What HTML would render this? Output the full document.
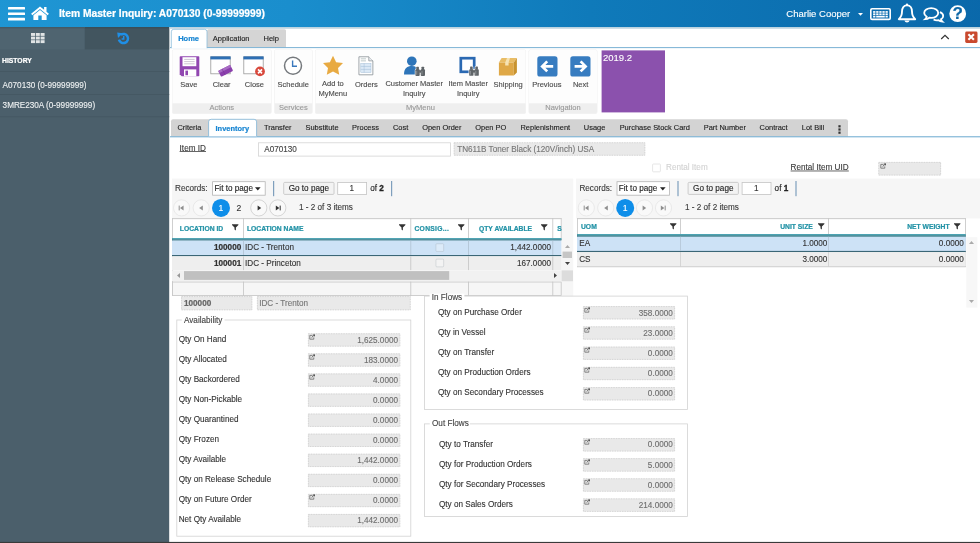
<!DOCTYPE html>
<html lang="en">
<head>
<meta charset="utf-8">
<title>Item Master Inquiry: A070130 (0-99999999)</title>
<style>
html,body{margin:0;padding:0;}
body{width:980px;height:543px;overflow:hidden;position:relative;background:#fff;font-family:"Liberation Sans",Arial,sans-serif;}
#app{position:absolute;left:0;top:0;width:980px;height:543px;overflow:hidden;}
#layer{position:absolute;left:0;top:0;width:980px;height:543px;will-change:transform;}
#app span,#app svg{position:absolute;}
#bg{left:0;top:0;overflow:visible;}
.t{white-space:nowrap;display:block;-webkit-text-stroke:0.12px;}
.b{font-weight:bold;-webkit-text-stroke:0.22px;}
.t b{font-weight:bold;-webkit-text-stroke:0.3px;}
.i{overflow:visible;}
</style>
</head>
<body>
<div id="app">
<div id="layer">
<svg id="bg" width="980" height="543" viewBox="0 0 980 543"><defs><linearGradient id="hg" x1="0" y1="0" x2="1" y2="0"><stop offset="0" stop-color="#1f96d4"/><stop offset="0.3" stop-color="#1a8ecd"/><stop offset="0.6" stop-color="#0f7aba"/><stop offset="1" stop-color="#0a68aa"/></linearGradient></defs>
<rect x="-8.00" y="-8.00" width="996.00" height="35.20" fill="url(#hg)" />
<rect x="8.00" y="6.90" width="17.00" height="2.70" fill="#fff" rx="0.5" />
<rect x="8.00" y="12.40" width="17.00" height="2.70" fill="#fff" rx="0.5" />
<rect x="8.00" y="17.70" width="17.00" height="2.70" fill="#fff" rx="0.5" />
<circle cx="957.7" cy="13.7" r="8.4" fill="#fff"/>
<rect x="-8.00" y="27.20" width="177.20" height="523.80" fill="#4b5f6b" />
<rect x="-8.00" y="27.00" width="92.80" height="22.40" fill="#4f6470" />
<rect x="84.80" y="27.00" width="84.40" height="22.40" fill="#42555f" />
<rect x="-8.00" y="27.20" width="177.20" height="1.10" fill="rgba(30,50,62,0.25)" />
<rect x="-8.00" y="71.20" width="177.20" height="0.80" fill="#445762" />
<rect x="-8.00" y="94.00" width="177.20" height="0.80" fill="#445762" />
<rect x="-8.00" y="116.40" width="177.20" height="0.80" fill="#445762" />
<rect x="169.20" y="27.20" width="818.80" height="1.50" fill="#b9d0dc" />
<path d="M207.00 47.20 V30.70 Q207.00 29.20 208.50 29.20 H284.50 Q286.00 29.20 286.00 30.70 V47.20" fill="#d5d5d5"/>
<rect x="170.00" y="47.20" width="818.00" height="0.90" fill="#6aa9cf" />
<path d="M171.30 48.20 V31.80 Q171.30 29.30 173.80 29.30 H204.50 Q207.00 29.30 207.00 31.80 V48.20" fill="#fff" stroke="#8dbcda" stroke-width="0.8"/>
<rect x="965.20" y="31.60" width="12.30" height="11.40" fill="#c9492e" rx="1.4" />
<rect x="172.00" y="49.40" width="99.60" height="64.50" fill="#ededed" rx="1.8" />
<rect x="172.40" y="49.80" width="98.80" height="63.70" fill="#fdfdfd" rx="1.5" />
<path d="M172.4 103.2 H271.2 V112 Q271.2 113.5 269.7 113.5 H173.9 Q172.4 113.5 172.4 112 Z" fill="#efefef"/>
<rect x="274.20" y="49.40" width="38.40" height="64.50" fill="#ededed" rx="1.8" />
<rect x="274.60" y="49.80" width="37.60" height="63.70" fill="#fdfdfd" rx="1.5" />
<path d="M274.6 103.2 H312.2 V112 Q312.2 113.5 310.7 113.5 H276.1 Q274.6 113.5 274.6 112 Z" fill="#efefef"/>
<rect x="315.00" y="49.40" width="211.00" height="64.50" fill="#ededed" rx="1.8" />
<rect x="315.40" y="49.80" width="210.20" height="63.70" fill="#fdfdfd" rx="1.5" />
<path d="M315.4 103.2 H525.6 V112 Q525.6 113.5 524.1 113.5 H316.9 Q315.4 113.5 315.4 112 Z" fill="#efefef"/>
<rect x="528.60" y="49.40" width="68.80" height="64.50" fill="#ededed" rx="1.8" />
<rect x="529.00" y="49.80" width="68.00" height="63.70" fill="#fdfdfd" rx="1.5" />
<path d="M529 103.2 H597 V112 Q597 113.5 595.5 113.5 H530.5 Q529 113.5 529 112 Z" fill="#efefef"/>
<rect x="601.60" y="50.40" width="63.40" height="62.00" fill="#8b51ad" />
<path d="M171.00 136.60 V121.30 Q171.00 119.30 173.00 119.30 H846.00 Q848.00 119.30 848.00 121.30 V136.60" fill="#d3d3d3"/>
<rect x="170.00" y="136.30" width="818.00" height="1.00" fill="#6aa9cf" />
<path d="M208.60 136.40 V121.80 Q208.60 119.30 211.10 119.30 H254.10 Q256.60 119.30 256.60 121.80 V136.40" fill="#fff" stroke="#7fb4d6" stroke-width="0.8"/>
<rect x="209.00" y="136.30" width="47.20" height="1.00" fill="#a9cde6" />
<rect x="838.40" y="125.20" width="2.20" height="2.20" fill="#333" />
<rect x="838.40" y="128.40" width="2.20" height="2.20" fill="#333" />
<rect x="838.40" y="131.60" width="2.20" height="2.20" fill="#333" />
<rect x="179.60" y="151.10" width="26.40" height="0.75" fill="#333" />
<rect x="258.40" y="142.80" width="192.00" height="13.30" fill="#fff" stroke="#d4d4d4" stroke-width="0.8" />
<rect x="453.80" y="142.40" width="191.40" height="13.20" fill="#e9e9e9"/>
<rect x="454.15" y="142.75" width="190.70" height="12.50" fill="none" stroke="#cbcbcb" stroke-width="0.7" stroke-dasharray="1.4 1.1" />
<rect x="652.60" y="164.00" width="7.80" height="7.80" fill="#fff" stroke="#e0e0e0" stroke-width="0.8" rx="0.8" />
<rect x="790.60" y="170.60" width="58.20" height="0.75" fill="#333" />
<rect x="878.40" y="162.00" width="62.60" height="13.40" fill="#e9e9e9"/>
<rect x="878.75" y="162.35" width="61.90" height="12.70" fill="none" stroke="#cbcbcb" stroke-width="0.7" stroke-dasharray="1.4 1.1" />
<rect x="172.00" y="178.60" width="401.20" height="39.80" fill="#f6f6f6" />
<rect x="212.60" y="181.70" width="52.60" height="13.50" fill="#fff" stroke="#b4b4b4" stroke-width="0.8" />
<rect x="273.00" y="181.00" width="1.20" height="15.20" fill="#7f9fbd" />
<rect x="283.70" y="182.40" width="50.30" height="12.00" fill="#f3f3f3" stroke="#c2c2c2" stroke-width="0.8" rx="1" />
<rect x="337.70" y="182.40" width="28.90" height="12.00" fill="#fff" stroke="#c4c4c4" stroke-width="0.8" />
<rect x="391.00" y="181.00" width="1.20" height="15.20" fill="#7f9fbd" />
<circle cx="181.6" cy="207.9" r="8.1" fill="#f9f9f9" stroke="#e2e2e2" stroke-width="0.7"/>
<circle cx="201.2" cy="207.9" r="8.1" fill="#f9f9f9" stroke="#e2e2e2" stroke-width="0.7"/>
<circle cx="221" cy="207.9" r="9" fill="#0e8ee9"/>
<circle cx="258.8" cy="207.9" r="8.1" fill="#f9f9f9" stroke="#c6c6c6" stroke-width="0.7"/>
<circle cx="277.8" cy="207.9" r="8.1" fill="#f9f9f9" stroke="#c6c6c6" stroke-width="0.7"/>
<rect x="576.00" y="178.60" width="412.00" height="39.80" fill="#f6f6f6" />
<rect x="617.00" y="181.70" width="52.60" height="13.50" fill="#fff" stroke="#b4b4b4" stroke-width="0.8" />
<rect x="677.40" y="181.00" width="1.20" height="15.20" fill="#7f9fbd" />
<rect x="688.10" y="182.40" width="50.30" height="12.00" fill="#f3f3f3" stroke="#c2c2c2" stroke-width="0.8" rx="1" />
<rect x="742.10" y="182.40" width="28.90" height="12.00" fill="#fff" stroke="#c4c4c4" stroke-width="0.8" />
<rect x="795.40" y="181.00" width="1.20" height="15.20" fill="#7f9fbd" />
<circle cx="586.3" cy="207.9" r="8.1" fill="#f9f9f9" stroke="#e2e2e2" stroke-width="0.7"/>
<circle cx="605.7" cy="207.9" r="8.1" fill="#f9f9f9" stroke="#e2e2e2" stroke-width="0.7"/>
<circle cx="625.2" cy="207.9" r="9" fill="#0e8ee9"/>
<circle cx="644.5" cy="207.9" r="8.1" fill="#f9f9f9" stroke="#e2e2e2" stroke-width="0.7"/>
<circle cx="663.5" cy="207.9" r="8.1" fill="#f9f9f9" stroke="#e2e2e2" stroke-width="0.7"/>
<rect x="561.60" y="218.00" width="11.60" height="78.20" fill="#f6f6f6" />
<rect x="172.00" y="218.30" width="389.60" height="19.90" fill="#fff" />
<rect x="172.00" y="218.30" width="389.60" height="0.80" fill="#bdbdbd" />
<rect x="172.00" y="218.30" width="0.80" height="77.50" fill="#c4c4c4" />
<rect x="560.80" y="218.30" width="0.80" height="19.90" fill="#c4c4c4" />
<rect x="243.10" y="218.30" width="0.80" height="19.90" fill="#c4c4c4" />
<rect x="410.40" y="218.30" width="0.80" height="19.90" fill="#c4c4c4" />
<rect x="468.20" y="218.30" width="0.80" height="19.90" fill="#c4c4c4" />
<rect x="552.40" y="218.30" width="0.80" height="19.90" fill="#c4c4c4" />
<rect x="172.00" y="238.10" width="389.60" height="1.50" fill="#3f9cac" />
<rect x="172.00" y="239.40" width="389.60" height="1.30" fill="#2c7080" />
<rect x="172.00" y="240.60" width="389.60" height="14.60" fill="#cde2f6" />
<rect x="172.00" y="255.00" width="389.60" height="1.30" fill="#3a6676" />
<rect x="172.00" y="256.30" width="389.60" height="13.90" fill="#eeeeee" />
<rect x="243.10" y="240.60" width="0.80" height="14.40" fill="#b0c2d2" />
<rect x="243.10" y="256.30" width="0.80" height="13.90" fill="#c4c4c4" />
<rect x="410.40" y="240.60" width="0.80" height="14.40" fill="#b0c2d2" />
<rect x="410.40" y="256.30" width="0.80" height="13.90" fill="#c4c4c4" />
<rect x="468.20" y="240.60" width="0.80" height="14.40" fill="#b0c2d2" />
<rect x="468.20" y="256.30" width="0.80" height="13.90" fill="#c4c4c4" />
<rect x="552.40" y="240.60" width="0.80" height="14.40" fill="#b0c2d2" />
<rect x="552.40" y="256.30" width="0.80" height="13.90" fill="#c4c4c4" />
<rect x="435.95" y="243.75" width="7.70" height="7.70" fill="rgba(255,255,255,0.3)" stroke="rgba(150,160,170,0.4)" stroke-width="0.7" rx="0.8" />
<rect x="435.95" y="259.15" width="7.70" height="7.70" fill="rgba(255,255,255,0.3)" stroke="rgba(150,160,170,0.4)" stroke-width="0.7" rx="0.8" />
<rect x="561.60" y="240.00" width="11.40" height="30.40" fill="#f6f6f6" />
<rect x="562.60" y="251.60" width="9.40" height="6.40" fill="#c6c6c6" />
<rect x="172.00" y="270.40" width="389.60" height="10.80" fill="#f1f1f1" />
<rect x="184.00" y="271.10" width="265.20" height="8.80" fill="#c0c0c0" />
<rect x="561.60" y="270.40" width="11.40" height="10.80" fill="#dcdcdc" />
<rect x="172.40" y="282.00" width="388.80" height="13.40" fill="#f6f6f6" stroke="#c4c4c4" stroke-width="0.8" />
<rect x="243.10" y="281.60" width="0.80" height="14.20" fill="#c4c4c4" />
<rect x="410.40" y="281.60" width="0.80" height="14.20" fill="#c4c4c4" />
<rect x="468.20" y="281.60" width="0.80" height="14.20" fill="#c4c4c4" />
<rect x="552.40" y="281.60" width="0.80" height="14.20" fill="#c4c4c4" />
<rect x="577.00" y="218.30" width="388.80" height="15.90" fill="#fff" />
<rect x="577.00" y="218.30" width="388.80" height="0.80" fill="#bdbdbd" />
<rect x="577.00" y="218.30" width="0.80" height="48.70" fill="#c4c4c4" />
<rect x="965.00" y="218.30" width="0.80" height="48.70" fill="#c4c4c4" />
<rect x="680.20" y="218.30" width="0.80" height="15.90" fill="#c4c4c4" />
<rect x="828.20" y="218.30" width="0.80" height="15.90" fill="#c4c4c4" />
<rect x="577.00" y="234.10" width="388.80" height="1.50" fill="#3a9aaa" />
<rect x="577.00" y="235.40" width="388.80" height="1.40" fill="#2c7484" />
<rect x="577.00" y="236.80" width="388.80" height="14.20" fill="#cde2f6" />
<rect x="577.00" y="250.90" width="388.80" height="1.30" fill="#3a6676" />
<rect x="577.00" y="252.10" width="388.80" height="14.70" fill="#eeeeee" />
<rect x="577.00" y="266.40" width="388.80" height="0.80" fill="#c4c4c4" />
<rect x="680.20" y="236.80" width="0.80" height="14.00" fill="#b4c6d6" />
<rect x="680.20" y="252.10" width="0.80" height="14.70" fill="#cfcfcf" />
<rect x="828.20" y="236.80" width="0.80" height="14.00" fill="#b4c6d6" />
<rect x="828.20" y="252.10" width="0.80" height="14.70" fill="#cfcfcf" />
<rect x="966.30" y="237.20" width="11.10" height="70.40" fill="#f7f7f7" />
<rect x="181.20" y="296.20" width="71.00" height="14.00" fill="#e9e9e9"/>
<rect x="181.55" y="296.55" width="70.30" height="13.30" fill="none" stroke="#cbcbcb" stroke-width="0.7" stroke-dasharray="1.4 1.1" />
<rect x="257.00" y="296.20" width="153.60" height="14.00" fill="#e9e9e9"/>
<rect x="257.35" y="296.55" width="152.90" height="13.30" fill="none" stroke="#cbcbcb" stroke-width="0.7" stroke-dasharray="1.4 1.1" />
<rect x="176.80" y="320.00" width="234.00" height="216.20" fill="none" stroke="#d2d2d2" stroke-width="0.8" />
<rect x="181.80" y="317.60" width="42.80" height="4.00" fill="#fff" />
<rect x="308.00" y="333.40" width="92.20" height="13.10" fill="#e9e9e9"/>
<rect x="308.35" y="333.75" width="91.50" height="12.40" fill="none" stroke="#cbcbcb" stroke-width="0.7" stroke-dasharray="1.4 1.1" />
<rect x="308.00" y="353.47" width="92.20" height="13.10" fill="#e9e9e9"/>
<rect x="308.35" y="353.82" width="91.50" height="12.40" fill="none" stroke="#cbcbcb" stroke-width="0.7" stroke-dasharray="1.4 1.1" />
<rect x="308.00" y="373.54" width="92.20" height="13.10" fill="#e9e9e9"/>
<rect x="308.35" y="373.89" width="91.50" height="12.40" fill="none" stroke="#cbcbcb" stroke-width="0.7" stroke-dasharray="1.4 1.1" />
<rect x="308.00" y="393.61" width="92.20" height="13.10" fill="#e9e9e9"/>
<rect x="308.35" y="393.96" width="91.50" height="12.40" fill="none" stroke="#cbcbcb" stroke-width="0.7" stroke-dasharray="1.4 1.1" />
<rect x="308.00" y="413.68" width="92.20" height="13.10" fill="#e9e9e9"/>
<rect x="308.35" y="414.03" width="91.50" height="12.40" fill="none" stroke="#cbcbcb" stroke-width="0.7" stroke-dasharray="1.4 1.1" />
<rect x="308.00" y="433.75" width="92.20" height="13.10" fill="#e9e9e9"/>
<rect x="308.35" y="434.10" width="91.50" height="12.40" fill="none" stroke="#cbcbcb" stroke-width="0.7" stroke-dasharray="1.4 1.1" />
<rect x="308.00" y="453.82" width="92.20" height="13.10" fill="#e9e9e9"/>
<rect x="308.35" y="454.17" width="91.50" height="12.40" fill="none" stroke="#cbcbcb" stroke-width="0.7" stroke-dasharray="1.4 1.1" />
<rect x="308.00" y="473.89" width="92.20" height="13.10" fill="#e9e9e9"/>
<rect x="308.35" y="474.24" width="91.50" height="12.40" fill="none" stroke="#cbcbcb" stroke-width="0.7" stroke-dasharray="1.4 1.1" />
<rect x="308.00" y="493.96" width="92.20" height="13.10" fill="#e9e9e9"/>
<rect x="308.35" y="494.31" width="91.50" height="12.40" fill="none" stroke="#cbcbcb" stroke-width="0.7" stroke-dasharray="1.4 1.1" />
<rect x="308.00" y="514.03" width="92.20" height="13.10" fill="#e9e9e9"/>
<rect x="308.35" y="514.38" width="91.50" height="12.40" fill="none" stroke="#cbcbcb" stroke-width="0.7" stroke-dasharray="1.4 1.1" />
<rect x="424.50" y="296.10" width="262.90" height="113.30" fill="none" stroke="#d2d2d2" stroke-width="0.8" />
<rect x="429.60" y="293.70" width="34.80" height="4.00" fill="#fff" />
<rect x="583.00" y="306.20" width="92.00" height="13.10" fill="#e9e9e9"/>
<rect x="583.35" y="306.55" width="91.30" height="12.40" fill="none" stroke="#cbcbcb" stroke-width="0.7" stroke-dasharray="1.4 1.1" />
<rect x="583.00" y="326.45" width="92.00" height="13.10" fill="#e9e9e9"/>
<rect x="583.35" y="326.80" width="91.30" height="12.40" fill="none" stroke="#cbcbcb" stroke-width="0.7" stroke-dasharray="1.4 1.1" />
<rect x="583.00" y="346.70" width="92.00" height="13.10" fill="#e9e9e9"/>
<rect x="583.35" y="347.05" width="91.30" height="12.40" fill="none" stroke="#cbcbcb" stroke-width="0.7" stroke-dasharray="1.4 1.1" />
<rect x="583.00" y="366.95" width="92.00" height="13.10" fill="#e9e9e9"/>
<rect x="583.35" y="367.30" width="91.30" height="12.40" fill="none" stroke="#cbcbcb" stroke-width="0.7" stroke-dasharray="1.4 1.1" />
<rect x="583.00" y="387.20" width="92.00" height="13.10" fill="#e9e9e9"/>
<rect x="583.35" y="387.55" width="91.30" height="12.40" fill="none" stroke="#cbcbcb" stroke-width="0.7" stroke-dasharray="1.4 1.1" />
<rect x="424.50" y="423.90" width="262.90" height="92.60" fill="none" stroke="#d2d2d2" stroke-width="0.8" />
<rect x="429.80" y="421.50" width="40.20" height="4.00" fill="#fff" />
<rect x="583.00" y="438.20" width="92.00" height="13.20" fill="#e9e9e9"/>
<rect x="583.35" y="438.55" width="91.30" height="12.50" fill="none" stroke="#cbcbcb" stroke-width="0.7" stroke-dasharray="1.4 1.1" />
<rect x="583.00" y="458.30" width="92.00" height="13.20" fill="#e9e9e9"/>
<rect x="583.35" y="458.65" width="91.30" height="12.50" fill="none" stroke="#cbcbcb" stroke-width="0.7" stroke-dasharray="1.4 1.1" />
<rect x="583.00" y="478.40" width="92.00" height="13.20" fill="#e9e9e9"/>
<rect x="583.35" y="478.75" width="91.30" height="12.50" fill="none" stroke="#cbcbcb" stroke-width="0.7" stroke-dasharray="1.4 1.1" />
<rect x="583.00" y="498.50" width="92.00" height="13.20" fill="#e9e9e9"/>
<rect x="583.35" y="498.85" width="91.30" height="12.50" fill="none" stroke="#cbcbcb" stroke-width="0.7" stroke-dasharray="1.4 1.1" />
<rect x="-8.00" y="541.90" width="996.00" height="9.10" fill="#3a3a3a" />
</svg>
<header id="topbar">
<svg class="i" style="left:31.40px;top:6.40px;" width="18" height="14" viewBox="0 0 18 14"><path d="M9 0.5 L0.1 7.7 L1.3 9.2 L9 3 L16.7 9.2 L17.9 7.7 L15.5 5.7 V1 H13.1 V3.8 Z" fill="#fff"/><path d="M2.4 9.3 L9 3.9 L15.6 9.3 V13.9 H10.7 V9.6 H7.3 V13.9 H2.4 Z" fill="#fff"/></svg>
<svg class="i" style="left:858.00px;top:12.60px;" width="5" height="3" viewBox="0 0 5 3"><path d="M0 0 H5 L2.5 2.8 Z" fill="#fff"/></svg>
<svg class="i" style="left:870.40px;top:8.20px;" width="21" height="12.2" viewBox="0 0 21 12.2"><rect x="0.8" y="0.8" width="19.4" height="10.6" rx="1.2" fill="none" stroke="#fff" stroke-width="1.6"/><g fill="#fff"><rect x="3.1" y="3.1" width="2.3" height="1.7"/><rect x="6.2" y="3.1" width="2.3" height="1.7"/><rect x="9.3" y="3.1" width="2.3" height="1.7"/><rect x="12.4" y="3.1" width="2.3" height="1.7"/><rect x="15.5" y="3.1" width="2.3" height="1.7"/><rect x="3.1" y="5.4" width="2.3" height="1.7"/><rect x="6.2" y="5.4" width="2.3" height="1.7"/><rect x="9.3" y="5.4" width="2.3" height="1.7"/><rect x="12.4" y="5.4" width="2.3" height="1.7"/><rect x="15.5" y="5.4" width="2.3" height="1.7"/><rect x="3.1" y="7.8" width="2.3" height="1.7"/><rect x="6.2" y="7.8" width="8.6" height="1.7"/><rect x="15.5" y="7.8" width="2.3" height="1.7"/></g></svg>
<svg class="i" style="left:897.00px;top:3.00px;" width="20" height="21" viewBox="0 0 20 21"><path d="M10 2.4 C6.4 2.4 5 5.2 5 8.6 C5 12.6 3.6 14.6 1.8 16.2 H18.2 C16.4 14.6 15 12.6 15 8.6 C15 5.2 13.6 2.4 10 2.4 Z" fill="none" stroke="#fff" stroke-width="1.9" stroke-linejoin="round"/><path d="M7.4 17.6 A2.7 2.7 0 0 0 12.6 17.6 Z" fill="#fff"/><circle cx="10" cy="1.7" r="1.2" fill="#fff"/></svg>
<svg class="i" style="left:922.60px;top:6.60px;" width="22" height="16" viewBox="0 0 22 16"><path d="M8.2 1.2 C4.2 1.2 1.2 3.3 1.2 6 C1.2 7.5 2.2 8.8 3.7 9.7 C3.5 10.7 3 11.5 2.2 12.2 C3.9 12.1 5.3 11.5 6.3 10.7 C6.9 10.8 7.5 10.85 8.2 10.85 C12.2 10.85 15.2 8.7 15.2 6 C15.2 3.3 12.2 1.2 8.2 1.2 Z" fill="none" stroke="#fff" stroke-width="1.8"/><path d="M16.9 5.2 C18.9 6 20.2 7.4 20.2 9 C20.2 10.3 19.4 11.5 18 12.3 C18.2 13.2 18.7 14 19.4 14.6 C17.8 14.5 16.5 14 15.5 13.2 C14.2 13.4 12 13.3 10.6 12.5" fill="none" stroke="#fff" stroke-width="1.8"/></svg>
<span class="t b" style="left:59.00px;top:7px;height:14px;line-height:14px;color:#fff;font-size:10.25px;">Item Master Inquiry: A070130 (0-99999999)</span>
<span class="t " style="left:786.30px;top:7px;height:14px;line-height:14px;color:#fff;font-size:9.5px;">Charlie Cooper</span>
<span class="t b" style="left:807.80px;width:300px;text-align:center;top:5px;height:18px;line-height:18px;color:#0b66a6;font-size:17px;">?</span>
</header>
<aside id="sidebar">
<svg class="i" style="left:31.30px;top:32.80px;" width="14" height="11" viewBox="0 0 14 11"><rect x="0.0" y="0.0" width="4.0" height="2.9" fill="#e0e4e5"/><rect x="4.8" y="0.0" width="4.0" height="2.9" fill="#e0e4e5"/><rect x="9.6" y="0.0" width="4.0" height="2.9" fill="#e0e4e5"/><rect x="0.0" y="3.6" width="4.0" height="2.9" fill="#e0e4e5"/><rect x="4.8" y="3.6" width="4.0" height="2.9" fill="#e0e4e5"/><rect x="9.6" y="3.6" width="4.0" height="2.9" fill="#e0e4e5"/><rect x="0.0" y="7.2" width="4.0" height="2.9" fill="#e0e4e5"/><rect x="4.8" y="7.2" width="4.0" height="2.9" fill="#e0e4e5"/><rect x="9.6" y="7.2" width="4.0" height="2.9" fill="#e0e4e5"/></svg>
<svg class="i" style="left:116.60px;top:32.00px;" width="13" height="13" viewBox="0 0 13 13"><path d="M3.76 2.73 A4.6 4.6 0 1 1 1.96 7.69" fill="none" stroke="#1f8fe6" stroke-width="2.5"/><path d="M0.2 0.5 L5.8 1.2 L1 5.9 Z" fill="#1f8fe6"/><path d="M6.7 4 V6.9 H4.6" fill="none" stroke="#1f8fe6" stroke-width="1.5"/></svg>
<span class="t b" style="left:2.00px;top:56px;height:10px;line-height:10px;color:#fff;font-size:6.8px;">HISTORY</span>
<span class="t " style="left:2.60px;top:80px;height:12px;line-height:12px;color:#eef1f2;font-size:8.17px;">A070130 (0-99999999)</span>
<span class="t " style="left:2.60px;top:100px;height:12px;line-height:12px;color:#eef1f2;font-size:8.17px;">3MRE230A (0-99999999)</span>
</aside>
<nav id="ribbon">
<svg class="i" style="left:939.60px;top:33.90px;" width="10" height="6" viewBox="0 0 10 6"><path d="M1.2 5 L5 1.4 L8.8 5" fill="none" stroke="#333" stroke-width="1.2"/></svg>
<svg class="i" style="left:965.20px;top:31.20px;" width="12.3" height="12" viewBox="0 0 12.3 12"><path d="M3.4 3.2 L8.9 8.7 M8.9 3.2 L3.4 8.7" stroke="#fff" stroke-width="2.1"/></svg>
<svg class="i" style="left:178.60px;top:55.60px;" width="21" height="21" viewBox="0 0 21 21"><path d="M0.7 1.1 Q0.7 0.3 1.5 0.3 H19.5 Q20.3 0.3 20.3 1.1 V19.5 Q20.3 20.3 19.5 20.3 H2.7 L0.7 18.3 Z" fill="#9147b1"/><rect x="3.5" y="1.2" width="13.8" height="9" fill="#fff"/><g stroke="#c2b8c8" stroke-width="0.8"><path d="M5.2 3.4 H15.6 M5.2 5.6 H15.6 M5.2 7.8 H15.6"/></g><rect x="5" y="13.4" width="12.3" height="6.9" fill="#fff"/><rect x="6.4" y="14.6" width="2.6" height="4.6" fill="#9147b1"/></svg>
<svg class="i" style="left:210.10px;top:56.40px;" width="23" height="21" viewBox="0 0 23 21"><rect x="0.8" y="0.8" width="19.4" height="17" fill="#fff" stroke="#9a9a9a" stroke-width="0.8"/><rect x="0.4" y="0.4" width="20.2" height="3" fill="#2e6fb4"/><g transform="rotate(-27 15.6 15)"><rect x="9" y="11.6" width="13.4" height="6.6" rx="0.8" fill="#8a3fac"/><rect x="9" y="11.6" width="13.4" height="2.4" rx="0.8" fill="#a86cc4"/><path d="M13.4 11.6 V18.2" stroke="#7a339b" stroke-width="0.6"/></g></svg>
<svg class="i" style="left:243.10px;top:56.40px;" width="23" height="21" viewBox="0 0 23 21"><rect x="0.8" y="0.8" width="19.4" height="17" fill="#fff" stroke="#9a9a9a" stroke-width="0.8"/><rect x="0.4" y="0.4" width="20.2" height="3" fill="#2e6fb4"/><circle cx="17" cy="15.4" r="4.9" fill="#d8483c"/><path d="M15 13.4 L19 17.4 M19 13.4 L15 17.4" stroke="#fff" stroke-width="1.6"/></svg>
<svg class="i" style="left:283.00px;top:56.00px;" width="20" height="20" viewBox="0 0 20 20"><circle cx="10" cy="9.8" r="8.5" fill="#fff" stroke="#75797d" stroke-width="1.5"/><path d="M9.6 4.6 V10.2 H14" fill="none" stroke="#3a78bd" stroke-width="1.4"/></svg>
<svg class="i" style="left:321.80px;top:55.40px;" width="22" height="20" viewBox="0 0 22 20"><path d="M11 0.8 L14.1 7.2 L21 8.1 L16 13 L17.2 19.8 L11 16.6 L4.8 19.8 L6 13 L1 8.1 L7.9 7.2 Z" fill="#e8aa42"/></svg>
<svg class="i" style="left:358.30px;top:56.00px;" width="15.8" height="19.6" viewBox="0 0 17 21"><path d="M1 0.8 H11.6 L16 5.2 V20.2 H1 Z" fill="#fff" stroke="#8d9499" stroke-width="0.9"/><path d="M11.6 0.8 V5.2 H16" fill="#e8ecef" stroke="#8d9499" stroke-width="0.8"/><rect x="3" y="8" width="11" height="9.6" fill="#dbe9f6" stroke="#9db9d4" stroke-width="0.5"/><path d="M3 11.2 H14 M3 14.4 H14 M6.6 8 V17.6" stroke="#9db9d4" stroke-width="0.5"/><path d="M3 3 H8.6 M3 5.2 H8.6" stroke="#9aa" stroke-width="0.7"/></svg>
<svg class="i" style="left:403.50px;top:56.00px;" width="22" height="21" viewBox="0 0 22 21"><circle cx="7.8" cy="5.2" r="4.8" fill="#2e75b9"/><path d="M0 18.4 C0 12.4 3.2 10 7.8 10 C11.6 10 13.8 11.6 14.6 14.4 V18.4 Z" fill="#2e75b9"/><g transform="translate(11.2 10.7)"><g fill="#fff" stroke="#fff" stroke-width="1.2"><rect x="1.1" y="0" width="2.6" height="3.2" rx="0.5"/><rect x="6.3" y="0" width="2.6" height="3.2" rx="0.5"/><rect x="0.2" y="2.6" width="4.3" height="6.6" rx="0.9"/><rect x="5.5" y="2.6" width="4.3" height="6.6" rx="0.9"/><rect x="4" y="3.6" width="2" height="2.4"/></g><g fill="#5f6468"><rect x="1.1" y="0" width="2.6" height="3.2" rx="0.5"/><rect x="6.3" y="0" width="2.6" height="3.2" rx="0.5"/><rect x="0.2" y="2.6" width="4.3" height="6.6" rx="0.9"/><rect x="5.5" y="2.6" width="4.3" height="6.6" rx="0.9"/><rect x="4" y="3.6" width="2" height="2.4"/></g><path d="M1.5 4.2 V8 M6.8 4.2 V8" stroke="#9a9ea2" stroke-width="0.7"/></g></svg>
<svg class="i" style="left:458.50px;top:56.00px;" width="22" height="21" viewBox="0 0 22 21"><rect x="1.8" y="2.2" width="13.4" height="13.6" fill="#fff" stroke="#2b69b2" stroke-width="2.7"/><g transform="translate(10 10.6)"><g fill="#fff" stroke="#fff" stroke-width="1.2"><rect x="1.1" y="0" width="2.6" height="3.2" rx="0.5"/><rect x="6.3" y="0" width="2.6" height="3.2" rx="0.5"/><rect x="0.2" y="2.6" width="4.3" height="6.6" rx="0.9"/><rect x="5.5" y="2.6" width="4.3" height="6.6" rx="0.9"/><rect x="4" y="3.6" width="2" height="2.4"/></g><g fill="#5f6468"><rect x="1.1" y="0" width="2.6" height="3.2" rx="0.5"/><rect x="6.3" y="0" width="2.6" height="3.2" rx="0.5"/><rect x="0.2" y="2.6" width="4.3" height="6.6" rx="0.9"/><rect x="5.5" y="2.6" width="4.3" height="6.6" rx="0.9"/><rect x="4" y="3.6" width="2" height="2.4"/></g><path d="M1.5 4.2 V8 M6.8 4.2 V8" stroke="#9a9ea2" stroke-width="0.7"/></g></svg>
<svg class="i" style="left:498.00px;top:57.00px;" width="20" height="19" viewBox="0 0 20 19"><path d="M0.9 5.4 H15.8 V18.5 H0.9 Z" fill="#dfa847"/><path d="M0.9 5.4 L3.6 1.1 H18.9 L15.8 5.4 Z" fill="#e9bd66"/><path d="M15.8 5.4 L18.9 1.1 V15.6 L15.8 18.5 Z" fill="#c8932f"/><path d="M7.2 5.4 L9 1.1 H12 L10.6 5.4 V8.6 H7.2 Z" fill="#f6e3b4"/></svg>
<svg class="i" style="left:536.80px;top:55.60px;" width="21" height="21" viewBox="0 0 21 21"><rect x="0.3" y="0.3" width="20.2" height="20.2" rx="2.6" fill="#377cc0"/><path d="M16.2 10.4 H5.8 M10.2 5.4 L5.2 10.4 L10.2 15.4" fill="none" stroke="#fff" stroke-width="2.7"/></svg>
<svg class="i" style="left:570.20px;top:55.60px;" width="21" height="21" viewBox="0 0 21 21"><rect x="0.3" y="0.3" width="20.2" height="20.2" rx="2.6" fill="#377cc0"/><path d="M4.6 10.4 H15 M10.6 5.4 L15.6 10.4 L10.6 15.4" fill="none" stroke="#fff" stroke-width="2.7"/></svg>
<span class="t b" style="left:38.60px;width:300px;text-align:center;top:33px;height:12px;line-height:12px;color:#1b87d3;font-size:7.5px;">Home</span>
<span class="t " style="left:81.20px;width:300px;text-align:center;top:33px;height:12px;line-height:12px;color:#222;font-size:7.5px;">Application</span>
<span class="t " style="left:121.20px;width:300px;text-align:center;top:33px;height:12px;line-height:12px;color:#222;font-size:7.5px;">Help</span>
<span class="t " style="left:71.80px;width:300px;text-align:center;top:103px;height:10px;line-height:10px;color:#999;font-size:7.5px;">Actions</span>
<span class="t " style="left:143.40px;width:300px;text-align:center;top:103px;height:10px;line-height:10px;color:#999;font-size:7.5px;">Services</span>
<span class="t " style="left:270.50px;width:300px;text-align:center;top:103px;height:10px;line-height:10px;color:#999;font-size:7.5px;">MyMenu</span>
<span class="t " style="left:413.00px;width:300px;text-align:center;top:103px;height:10px;line-height:10px;color:#999;font-size:7.5px;">Navigation</span>
<span class="t " style="left:38.80px;width:300px;text-align:center;top:79px;height:12px;line-height:12px;color:#4c4c4c;font-size:7.5px;">Save</span>
<span class="t " style="left:71.60px;width:300px;text-align:center;top:79px;height:12px;line-height:12px;color:#4c4c4c;font-size:7.5px;">Clear</span>
<span class="t " style="left:104.40px;width:300px;text-align:center;top:79px;height:12px;line-height:12px;color:#4c4c4c;font-size:7.5px;">Close</span>
<span class="t " style="left:143.20px;width:300px;text-align:center;top:79px;height:12px;line-height:12px;color:#4c4c4c;font-size:7.5px;">Schedule</span>
<span class="t " style="left:182.80px;width:300px;text-align:center;top:78px;height:12px;line-height:12px;color:#4c4c4c;font-size:7.5px;">Add to</span>
<span class="t " style="left:182.80px;width:300px;text-align:center;top:88px;height:12px;line-height:12px;color:#4c4c4c;font-size:7.5px;">MyMenu</span>
<span class="t " style="left:216.40px;width:300px;text-align:center;top:79px;height:12px;line-height:12px;color:#4c4c4c;font-size:7.5px;">Orders</span>
<span class="t " style="left:264.20px;width:300px;text-align:center;top:78px;height:12px;line-height:12px;color:#4c4c4c;font-size:7.5px;">Customer Master</span>
<span class="t " style="left:264.20px;width:300px;text-align:center;top:88px;height:12px;line-height:12px;color:#4c4c4c;font-size:7.5px;">Inquiry</span>
<span class="t " style="left:318.20px;width:300px;text-align:center;top:78px;height:12px;line-height:12px;color:#4c4c4c;font-size:7.5px;">Item Master</span>
<span class="t " style="left:318.20px;width:300px;text-align:center;top:88px;height:12px;line-height:12px;color:#4c4c4c;font-size:7.5px;">Inquiry</span>
<span class="t " style="left:358.20px;width:300px;text-align:center;top:79px;height:12px;line-height:12px;color:#4c4c4c;font-size:7.5px;">Shipping</span>
<span class="t " style="left:396.80px;width:300px;text-align:center;top:79px;height:12px;line-height:12px;color:#4c4c4c;font-size:7.5px;">Previous</span>
<span class="t " style="left:430.60px;width:300px;text-align:center;top:79px;height:12px;line-height:12px;color:#4c4c4c;font-size:7.5px;">Next</span>
<span class="t " style="left:603.00px;top:52px;height:12px;line-height:12px;color:#fff;font-size:9.5px;">2019.2</span>
</nav>
<nav id="tabs">
<span class="t " style="left:39.40px;width:300px;text-align:center;top:122px;height:12px;line-height:12px;color:#222;font-size:7.45px;">Criteria</span>
<span class="t " style="left:127.80px;width:300px;text-align:center;top:122px;height:12px;line-height:12px;color:#222;font-size:7.45px;">Transfer</span>
<span class="t " style="left:172.00px;width:300px;text-align:center;top:122px;height:12px;line-height:12px;color:#222;font-size:7.45px;">Substitute</span>
<span class="t " style="left:215.50px;width:300px;text-align:center;top:122px;height:12px;line-height:12px;color:#222;font-size:7.45px;">Process</span>
<span class="t " style="left:250.60px;width:300px;text-align:center;top:122px;height:12px;line-height:12px;color:#222;font-size:7.45px;">Cost</span>
<span class="t " style="left:291.80px;width:300px;text-align:center;top:122px;height:12px;line-height:12px;color:#222;font-size:7.45px;">Open Order</span>
<span class="t " style="left:340.80px;width:300px;text-align:center;top:122px;height:12px;line-height:12px;color:#222;font-size:7.45px;">Open PO</span>
<span class="t " style="left:395.30px;width:300px;text-align:center;top:122px;height:12px;line-height:12px;color:#222;font-size:7.45px;">Replenishment</span>
<span class="t " style="left:444.60px;width:300px;text-align:center;top:122px;height:12px;line-height:12px;color:#222;font-size:7.45px;">Usage</span>
<span class="t " style="left:504.80px;width:300px;text-align:center;top:122px;height:12px;line-height:12px;color:#222;font-size:7.45px;">Purchase Stock Card</span>
<span class="t " style="left:574.80px;width:300px;text-align:center;top:122px;height:12px;line-height:12px;color:#222;font-size:7.45px;">Part Number</span>
<span class="t " style="left:623.60px;width:300px;text-align:center;top:122px;height:12px;line-height:12px;color:#222;font-size:7.45px;">Contract</span>
<span class="t " style="left:663.00px;width:300px;text-align:center;top:122px;height:12px;line-height:12px;color:#222;font-size:7.45px;">Lot Bill</span>
<span class="t b" style="left:82.30px;width:300px;text-align:center;top:123px;height:12px;line-height:12px;color:#1b87d3;font-size:7.45px;">Inventory</span>
</nav>
<section id="form-head">
<svg class="i" style="left:879.60px;top:162.90px;" width="6.6" height="6" viewBox="0 0 6.6 6"><path d="M3.6 1.4 H0.8 V5.2 H4.8 V3.4" fill="none" stroke="#6c6c6c" stroke-width="0.8"/><path d="M2.6 3.6 L5.4 0.9" stroke="#555" stroke-width="0.9"/><path d="M3.6 0.4 H6 V2.8 Z" fill="#555"/></svg>
<span class="t " style="left:179.60px;top:143px;height:12px;line-height:12px;color:#3a3a3a;font-size:8.17px;">Item ID</span>
<span class="t " style="left:264.20px;top:144px;height:12px;line-height:12px;color:#444;font-size:8.17px;">A070130</span>
<span class="t " style="left:457.20px;top:144px;height:12px;line-height:12px;color:#777;font-size:8.17px;">TN611B Toner Black (120V/inch) USA</span>
<span class="t " style="left:666.00px;top:162px;height:12px;line-height:12px;color:#d2d2d2;font-size:8.17px;">Rental Item</span>
<span class="t " style="left:790.60px;top:162px;height:12px;line-height:12px;color:#3a3a3a;font-size:8.17px;">Rental Item UID</span>
</section>
<section id="grid-toolbars">
<svg class="i" style="left:255.40px;top:186.80px;" width="6" height="4" viewBox="0 0 6 4"><path d="M0 0.2 H5.6 L2.8 3.4 Z" fill="#222"/></svg>
<svg class="i" style="left:178.40px;top:204.90px;" width="6.4" height="6" viewBox="0 0 6.4 6"><path d="M1.2 0.6 V5.4" stroke="#8e8e8e" stroke-width="1"/><path d="M5.6 0.6 V5.4 L2 3 Z" fill="#8e8e8e"/></svg>
<svg class="i" style="left:198.00px;top:204.90px;" width="6.4" height="6" viewBox="0 0 6.4 6"><path d="M4.8 0.6 V5.4 L1.2 3 Z" fill="#8e8e8e"/></svg>
<svg class="i" style="left:255.60px;top:204.90px;" width="6.4" height="6" viewBox="0 0 6.4 6"><path d="M1.6 0.6 V5.4 L5.2 3 Z" fill="#333"/></svg>
<svg class="i" style="left:274.60px;top:204.90px;" width="6.4" height="6" viewBox="0 0 6.4 6"><path d="M5.2 0.6 V5.4" stroke="#333" stroke-width="1"/><path d="M0.8 0.6 V5.4 L4.4 3 Z" fill="#333"/></svg>
<svg class="i" style="left:659.80px;top:186.80px;" width="6" height="4" viewBox="0 0 6 4"><path d="M0 0.2 H5.6 L2.8 3.4 Z" fill="#222"/></svg>
<svg class="i" style="left:583.10px;top:204.90px;" width="6.4" height="6" viewBox="0 0 6.4 6"><path d="M1.2 0.6 V5.4" stroke="#8e8e8e" stroke-width="1"/><path d="M5.6 0.6 V5.4 L2 3 Z" fill="#8e8e8e"/></svg>
<svg class="i" style="left:602.50px;top:204.90px;" width="6.4" height="6" viewBox="0 0 6.4 6"><path d="M4.8 0.6 V5.4 L1.2 3 Z" fill="#8e8e8e"/></svg>
<svg class="i" style="left:641.30px;top:204.90px;" width="6.4" height="6" viewBox="0 0 6.4 6"><path d="M1.6 0.6 V5.4 L5.2 3 Z" fill="#8e8e8e"/></svg>
<svg class="i" style="left:660.30px;top:204.90px;" width="6.4" height="6" viewBox="0 0 6.4 6"><path d="M5.2 0.6 V5.4" stroke="#8e8e8e" stroke-width="1"/><path d="M0.8 0.6 V5.4 L4.4 3 Z" fill="#8e8e8e"/></svg>
<span class="t " style="left:175.00px;top:183px;height:12px;line-height:12px;color:#3a3a3a;font-size:8.17px;">Records:</span>
<span class="t " style="left:214.40px;top:183px;height:12px;line-height:12px;color:#222;font-size:8.17px;">Fit to page</span>
<span class="t " style="left:158.90px;width:300px;text-align:center;top:183px;height:12px;line-height:12px;color:#222;font-size:8.17px;">Go to page</span>
<span class="t " style="left:201.80px;width:300px;text-align:center;top:183px;height:12px;line-height:12px;color:#333;font-size:8.17px;">1</span>
<span class="t " style="left:370.20px;top:183px;height:12px;line-height:12px;color:#222;font-size:8.17px;">of <b>2</b></span>
<span class="t " style="left:71.00px;width:300px;text-align:center;top:202px;height:12px;line-height:12px;color:#fff;font-size:8.6px;">1</span>
<span class="t " style="left:89.00px;width:300px;text-align:center;top:202px;height:12px;line-height:12px;color:#333;font-size:8.6px;">2</span>
<span class="t " style="left:299.00px;top:202px;height:12px;line-height:12px;color:#3a3a3a;font-size:8.17px;">1 - 2 of 3 items</span>
<span class="t " style="left:579.40px;top:183px;height:12px;line-height:12px;color:#3a3a3a;font-size:8.17px;">Records:</span>
<span class="t " style="left:618.80px;top:183px;height:12px;line-height:12px;color:#222;font-size:8.17px;">Fit to page</span>
<span class="t " style="left:563.30px;width:300px;text-align:center;top:183px;height:12px;line-height:12px;color:#222;font-size:8.17px;">Go to page</span>
<span class="t " style="left:606.20px;width:300px;text-align:center;top:183px;height:12px;line-height:12px;color:#333;font-size:8.17px;">1</span>
<span class="t " style="left:774.60px;top:183px;height:12px;line-height:12px;color:#222;font-size:8.17px;">of <b>1</b></span>
<span class="t " style="left:475.20px;width:300px;text-align:center;top:202px;height:12px;line-height:12px;color:#fff;font-size:8.6px;">1</span>
<span class="t " style="left:685.00px;top:202px;height:12px;line-height:12px;color:#3a3a3a;font-size:8.17px;">1 - 2 of 2 items</span>
</section>
<section id="grid-locations">
<svg class="i" style="left:231.80px;top:223.70px;" width="6.4" height="6.6" viewBox="0 0 6.4 6.6"><path d="M0 0.2 H6.4 V0.9 L3.9 3.4 V6.5 L2.5 5.5 V3.4 L0 0.9 Z" fill="#333"/></svg>
<svg class="i" style="left:399.40px;top:223.70px;" width="6.4" height="6.6" viewBox="0 0 6.4 6.6"><path d="M0 0.2 H6.4 V0.9 L3.9 3.4 V6.5 L2.5 5.5 V3.4 L0 0.9 Z" fill="#333"/></svg>
<svg class="i" style="left:457.60px;top:223.70px;" width="6.4" height="6.6" viewBox="0 0 6.4 6.6"><path d="M0 0.2 H6.4 V0.9 L3.9 3.4 V6.5 L2.5 5.5 V3.4 L0 0.9 Z" fill="#333"/></svg>
<svg class="i" style="left:541.40px;top:223.70px;" width="6.4" height="6.6" viewBox="0 0 6.4 6.6"><path d="M0 0.2 H6.4 V0.9 L3.9 3.4 V6.5 L2.5 5.5 V3.4 L0 0.9 Z" fill="#333"/></svg>
<svg class="i" style="left:565.00px;top:244.60px;" width="5" height="3" viewBox="0 0 5 3"><path d="M0 3 L2.5 0 L5 3 Z" fill="#aaa"/></svg>
<svg class="i" style="left:565.00px;top:261.60px;" width="5" height="3" viewBox="0 0 5 3"><path d="M0 0 H5 L2.5 3 Z" fill="#444"/></svg>
<svg class="i" style="left:177.00px;top:273.40px;" width="3" height="5" viewBox="0 0 3 5"><path d="M3 0 V5 L0 2.5 Z" fill="#999"/></svg>
<svg class="i" style="left:554.40px;top:273.40px;" width="3" height="5" viewBox="0 0 3 5"><path d="M0 0 V5 L3 2.5 Z" fill="#444"/></svg>
<span class="t b" style="left:179.80px;top:224px;height:10px;line-height:10px;color:#2292a6;font-size:6.75px;">LOCATION ID</span>
<span class="t b" style="left:247.00px;top:224px;height:10px;line-height:10px;color:#2292a6;font-size:6.75px;">LOCATION NAME</span>
<span class="t b" style="left:414.50px;top:224px;height:10px;line-height:10px;color:#2292a6;font-size:6.75px;letter-spacing:0.25px;">CONSIG...</span>
<span class="t b" style="left:479.00px;top:224px;height:10px;line-height:10px;color:#2292a6;font-size:6.75px;">QTY AVAILABLE</span>
<span class="t b" style="left:557.20px;top:224px;height:10px;line-height:10px;color:#2292a6;font-size:6.75px;">S</span>
<span class="t b" style="left:-58.80px;width:300px;text-align:right;top:242px;height:12px;line-height:12px;color:#333;font-size:8.17px;">100000</span>
<span class="t " style="left:245.00px;top:242px;height:12px;line-height:12px;color:#333;font-size:8.17px;">IDC - Trenton</span>
<span class="t " style="left:251.00px;width:300px;text-align:right;top:242px;height:12px;line-height:12px;color:#333;font-size:8.17px;">1,442.0000</span>
<span class="t b" style="left:-58.80px;width:300px;text-align:right;top:258px;height:12px;line-height:12px;color:#333;font-size:8.17px;">100001</span>
<span class="t " style="left:245.00px;top:258px;height:12px;line-height:12px;color:#333;font-size:8.17px;">IDC - Princeton</span>
<span class="t " style="left:251.00px;width:300px;text-align:right;top:258px;height:12px;line-height:12px;color:#333;font-size:8.17px;">167.0000</span>
</section>
<section id="grid-uom">
<svg class="i" style="left:669.80px;top:223.10px;" width="6.4" height="6.6" viewBox="0 0 6.4 6.6"><path d="M0 0.2 H6.4 V0.9 L3.9 3.4 V6.5 L2.5 5.5 V3.4 L0 0.9 Z" fill="#333"/></svg>
<svg class="i" style="left:817.60px;top:223.10px;" width="6.4" height="6.6" viewBox="0 0 6.4 6.6"><path d="M0 0.2 H6.4 V0.9 L3.9 3.4 V6.5 L2.5 5.5 V3.4 L0 0.9 Z" fill="#333"/></svg>
<svg class="i" style="left:954.00px;top:223.10px;" width="6.4" height="6.6" viewBox="0 0 6.4 6.6"><path d="M0 0.2 H6.4 V0.9 L3.9 3.4 V6.5 L2.5 5.5 V3.4 L0 0.9 Z" fill="#333"/></svg>
<svg class="i" style="left:968.80px;top:241.40px;" width="5" height="3" viewBox="0 0 5 3"><path d="M0 3 L2.5 0 L5 3 Z" fill="#aaa"/></svg>
<svg class="i" style="left:968.80px;top:300.00px;" width="5" height="3" viewBox="0 0 5 3"><path d="M0 0 H5 L2.5 3 Z" fill="#aaa"/></svg>
<span class="t b" style="left:581.00px;top:222px;height:10px;line-height:10px;color:#2292a6;font-size:6.75px;">UOM</span>
<span class="t b" style="left:512.80px;width:300px;text-align:right;top:222px;height:10px;line-height:10px;color:#2292a6;font-size:6.75px;">UNIT SIZE</span>
<span class="t b" style="left:649.60px;width:300px;text-align:right;top:222px;height:10px;line-height:10px;color:#2292a6;font-size:6.75px;">NET WEIGHT</span>
<span class="t " style="left:579.20px;top:238px;height:12px;line-height:12px;color:#333;font-size:8.17px;">EA</span>
<span class="t " style="left:527.40px;width:300px;text-align:right;top:238px;height:12px;line-height:12px;color:#333;font-size:8.17px;">1.0000</span>
<span class="t " style="left:663.80px;width:300px;text-align:right;top:238px;height:12px;line-height:12px;color:#333;font-size:8.17px;">0.0000</span>
<span class="t " style="left:579.20px;top:254px;height:12px;line-height:12px;color:#333;font-size:8.17px;">CS</span>
<span class="t " style="left:527.40px;width:300px;text-align:right;top:254px;height:12px;line-height:12px;color:#333;font-size:8.17px;">3.0000</span>
<span class="t " style="left:663.80px;width:300px;text-align:right;top:254px;height:12px;line-height:12px;color:#333;font-size:8.17px;">0.0000</span>
</section>
<section id="details">
<svg class="i" style="left:309.10px;top:333.90px;" width="6.6" height="6" viewBox="0 0 6.6 6"><path d="M3.6 1.4 H0.8 V5.2 H4.8 V3.4" fill="none" stroke="#6c6c6c" stroke-width="0.8"/><path d="M2.6 3.6 L5.4 0.9" stroke="#555" stroke-width="0.9"/><path d="M3.6 0.4 H6 V2.8 Z" fill="#555"/></svg>
<svg class="i" style="left:309.10px;top:353.97px;" width="6.6" height="6" viewBox="0 0 6.6 6"><path d="M3.6 1.4 H0.8 V5.2 H4.8 V3.4" fill="none" stroke="#6c6c6c" stroke-width="0.8"/><path d="M2.6 3.6 L5.4 0.9" stroke="#555" stroke-width="0.9"/><path d="M3.6 0.4 H6 V2.8 Z" fill="#555"/></svg>
<svg class="i" style="left:309.10px;top:374.04px;" width="6.6" height="6" viewBox="0 0 6.6 6"><path d="M3.6 1.4 H0.8 V5.2 H4.8 V3.4" fill="none" stroke="#6c6c6c" stroke-width="0.8"/><path d="M2.6 3.6 L5.4 0.9" stroke="#555" stroke-width="0.9"/><path d="M3.6 0.4 H6 V2.8 Z" fill="#555"/></svg>
<svg class="i" style="left:309.10px;top:494.46px;" width="6.6" height="6" viewBox="0 0 6.6 6"><path d="M3.6 1.4 H0.8 V5.2 H4.8 V3.4" fill="none" stroke="#6c6c6c" stroke-width="0.8"/><path d="M2.6 3.6 L5.4 0.9" stroke="#555" stroke-width="0.9"/><path d="M3.6 0.4 H6 V2.8 Z" fill="#555"/></svg>
<svg class="i" style="left:584.10px;top:306.70px;" width="6.6" height="6" viewBox="0 0 6.6 6"><path d="M3.6 1.4 H0.8 V5.2 H4.8 V3.4" fill="none" stroke="#6c6c6c" stroke-width="0.8"/><path d="M2.6 3.6 L5.4 0.9" stroke="#555" stroke-width="0.9"/><path d="M3.6 0.4 H6 V2.8 Z" fill="#555"/></svg>
<svg class="i" style="left:584.10px;top:326.95px;" width="6.6" height="6" viewBox="0 0 6.6 6"><path d="M3.6 1.4 H0.8 V5.2 H4.8 V3.4" fill="none" stroke="#6c6c6c" stroke-width="0.8"/><path d="M2.6 3.6 L5.4 0.9" stroke="#555" stroke-width="0.9"/><path d="M3.6 0.4 H6 V2.8 Z" fill="#555"/></svg>
<svg class="i" style="left:584.10px;top:347.20px;" width="6.6" height="6" viewBox="0 0 6.6 6"><path d="M3.6 1.4 H0.8 V5.2 H4.8 V3.4" fill="none" stroke="#6c6c6c" stroke-width="0.8"/><path d="M2.6 3.6 L5.4 0.9" stroke="#555" stroke-width="0.9"/><path d="M3.6 0.4 H6 V2.8 Z" fill="#555"/></svg>
<svg class="i" style="left:584.10px;top:367.45px;" width="6.6" height="6" viewBox="0 0 6.6 6"><path d="M3.6 1.4 H0.8 V5.2 H4.8 V3.4" fill="none" stroke="#6c6c6c" stroke-width="0.8"/><path d="M2.6 3.6 L5.4 0.9" stroke="#555" stroke-width="0.9"/><path d="M3.6 0.4 H6 V2.8 Z" fill="#555"/></svg>
<svg class="i" style="left:584.10px;top:387.70px;" width="6.6" height="6" viewBox="0 0 6.6 6"><path d="M3.6 1.4 H0.8 V5.2 H4.8 V3.4" fill="none" stroke="#6c6c6c" stroke-width="0.8"/><path d="M2.6 3.6 L5.4 0.9" stroke="#555" stroke-width="0.9"/><path d="M3.6 0.4 H6 V2.8 Z" fill="#555"/></svg>
<svg class="i" style="left:584.10px;top:438.70px;" width="6.6" height="6" viewBox="0 0 6.6 6"><path d="M3.6 1.4 H0.8 V5.2 H4.8 V3.4" fill="none" stroke="#6c6c6c" stroke-width="0.8"/><path d="M2.6 3.6 L5.4 0.9" stroke="#555" stroke-width="0.9"/><path d="M3.6 0.4 H6 V2.8 Z" fill="#555"/></svg>
<svg class="i" style="left:584.10px;top:458.80px;" width="6.6" height="6" viewBox="0 0 6.6 6"><path d="M3.6 1.4 H0.8 V5.2 H4.8 V3.4" fill="none" stroke="#6c6c6c" stroke-width="0.8"/><path d="M2.6 3.6 L5.4 0.9" stroke="#555" stroke-width="0.9"/><path d="M3.6 0.4 H6 V2.8 Z" fill="#555"/></svg>
<svg class="i" style="left:584.10px;top:478.90px;" width="6.6" height="6" viewBox="0 0 6.6 6"><path d="M3.6 1.4 H0.8 V5.2 H4.8 V3.4" fill="none" stroke="#6c6c6c" stroke-width="0.8"/><path d="M2.6 3.6 L5.4 0.9" stroke="#555" stroke-width="0.9"/><path d="M3.6 0.4 H6 V2.8 Z" fill="#555"/></svg>
<svg class="i" style="left:584.10px;top:499.00px;" width="6.6" height="6" viewBox="0 0 6.6 6"><path d="M3.6 1.4 H0.8 V5.2 H4.8 V3.4" fill="none" stroke="#6c6c6c" stroke-width="0.8"/><path d="M2.6 3.6 L5.4 0.9" stroke="#555" stroke-width="0.9"/><path d="M3.6 0.4 H6 V2.8 Z" fill="#555"/></svg>
<span class="t b" style="left:184.00px;top:298px;height:12px;line-height:12px;color:#666;font-size:8.17px;">100000</span>
<span class="t " style="left:259.20px;top:298px;height:12px;line-height:12px;color:#777;font-size:8.17px;">IDC - Trenton</span>
<span class="t " style="left:184.00px;top:315px;height:12px;line-height:12px;color:#444;font-size:8.17px;">Availability</span>
<span class="t " style="left:178.70px;top:334px;height:12px;line-height:12px;color:#333;font-size:8.17px;">Qty On Hand</span>
<span class="t " style="left:98.00px;width:300px;text-align:right;top:335px;height:12px;line-height:12px;color:#6e6e6e;font-size:8.17px;">1,625.0000</span>
<span class="t " style="left:178.70px;top:354px;height:12px;line-height:12px;color:#333;font-size:8.17px;">Qty Allocated</span>
<span class="t " style="left:98.00px;width:300px;text-align:right;top:355px;height:12px;line-height:12px;color:#6e6e6e;font-size:8.17px;">183.0000</span>
<span class="t " style="left:178.70px;top:374px;height:12px;line-height:12px;color:#333;font-size:8.17px;">Qty Backordered</span>
<span class="t " style="left:98.00px;width:300px;text-align:right;top:375px;height:12px;line-height:12px;color:#6e6e6e;font-size:8.17px;">4.0000</span>
<span class="t " style="left:178.70px;top:394px;height:12px;line-height:12px;color:#333;font-size:8.17px;">Qty Non-Pickable</span>
<span class="t " style="left:98.00px;width:300px;text-align:right;top:395px;height:12px;line-height:12px;color:#6e6e6e;font-size:8.17px;">0.0000</span>
<span class="t " style="left:178.70px;top:414px;height:12px;line-height:12px;color:#333;font-size:8.17px;">Qty Quarantined</span>
<span class="t " style="left:98.00px;width:300px;text-align:right;top:415px;height:12px;line-height:12px;color:#6e6e6e;font-size:8.17px;">0.0000</span>
<span class="t " style="left:178.70px;top:434px;height:12px;line-height:12px;color:#333;font-size:8.17px;">Qty Frozen</span>
<span class="t " style="left:98.00px;width:300px;text-align:right;top:435px;height:12px;line-height:12px;color:#6e6e6e;font-size:8.17px;">0.0000</span>
<span class="t " style="left:178.70px;top:454px;height:12px;line-height:12px;color:#333;font-size:8.17px;">Qty Available</span>
<span class="t " style="left:98.00px;width:300px;text-align:right;top:455px;height:12px;line-height:12px;color:#6e6e6e;font-size:8.17px;">1,442.0000</span>
<span class="t " style="left:178.70px;top:474px;height:12px;line-height:12px;color:#333;font-size:8.17px;">Qty on Release Schedule</span>
<span class="t " style="left:98.00px;width:300px;text-align:right;top:475px;height:12px;line-height:12px;color:#6e6e6e;font-size:8.17px;">0.0000</span>
<span class="t " style="left:178.70px;top:494px;height:12px;line-height:12px;color:#333;font-size:8.17px;">Qty on Future Order</span>
<span class="t " style="left:98.00px;width:300px;text-align:right;top:495px;height:12px;line-height:12px;color:#6e6e6e;font-size:8.17px;">0.0000</span>
<span class="t " style="left:178.70px;top:514px;height:12px;line-height:12px;color:#333;font-size:8.17px;">Net Qty Available</span>
<span class="t " style="left:98.00px;width:300px;text-align:right;top:515px;height:12px;line-height:12px;color:#6e6e6e;font-size:8.17px;">1,442.0000</span>
<span class="t " style="left:431.80px;top:292px;height:12px;line-height:12px;color:#444;font-size:8.17px;">In Flows</span>
<span class="t " style="left:438.00px;top:307px;height:12px;line-height:12px;color:#333;font-size:8.17px;">Qty on Purchase Order</span>
<span class="t " style="left:372.80px;width:300px;text-align:right;top:308px;height:12px;line-height:12px;color:#6e6e6e;font-size:8.17px;">358.0000</span>
<span class="t " style="left:438.00px;top:327px;height:12px;line-height:12px;color:#333;font-size:8.17px;">Qty in Vessel</span>
<span class="t " style="left:372.80px;width:300px;text-align:right;top:328px;height:12px;line-height:12px;color:#6e6e6e;font-size:8.17px;">23.0000</span>
<span class="t " style="left:438.00px;top:347px;height:12px;line-height:12px;color:#333;font-size:8.17px;">Qty on Transfer</span>
<span class="t " style="left:372.80px;width:300px;text-align:right;top:348px;height:12px;line-height:12px;color:#6e6e6e;font-size:8.17px;">0.0000</span>
<span class="t " style="left:438.00px;top:367px;height:12px;line-height:12px;color:#333;font-size:8.17px;">Qty on Production Orders</span>
<span class="t " style="left:372.80px;width:300px;text-align:right;top:368px;height:12px;line-height:12px;color:#6e6e6e;font-size:8.17px;">0.0000</span>
<span class="t " style="left:438.00px;top:387px;height:12px;line-height:12px;color:#333;font-size:8.17px;">Qty on Secondary Processes</span>
<span class="t " style="left:372.80px;width:300px;text-align:right;top:388px;height:12px;line-height:12px;color:#6e6e6e;font-size:8.17px;">0.0000</span>
<span class="t " style="left:432.00px;top:418px;height:12px;line-height:12px;color:#444;font-size:8.17px;">Out Flows</span>
<span class="t " style="left:439.00px;top:439px;height:12px;line-height:12px;color:#333;font-size:8.17px;">Qty to Transfer</span>
<span class="t " style="left:372.80px;width:300px;text-align:right;top:439px;height:12px;line-height:12px;color:#6e6e6e;font-size:8.17px;">0.0000</span>
<span class="t " style="left:439.00px;top:459px;height:12px;line-height:12px;color:#333;font-size:8.17px;">Qty for Production Orders</span>
<span class="t " style="left:372.80px;width:300px;text-align:right;top:460px;height:12px;line-height:12px;color:#6e6e6e;font-size:8.17px;">5.0000</span>
<span class="t " style="left:439.00px;top:479px;height:12px;line-height:12px;color:#333;font-size:8.17px;">Qty for Secondary Processes</span>
<span class="t " style="left:372.80px;width:300px;text-align:right;top:480px;height:12px;line-height:12px;color:#6e6e6e;font-size:8.17px;">0.0000</span>
<span class="t " style="left:439.00px;top:499px;height:12px;line-height:12px;color:#333;font-size:8.17px;">Qty on Sales Orders</span>
<span class="t " style="left:372.80px;width:300px;text-align:right;top:500px;height:12px;line-height:12px;color:#6e6e6e;font-size:8.17px;">214.0000</span>
</section>
</div>
</div>
</body>
</html>
